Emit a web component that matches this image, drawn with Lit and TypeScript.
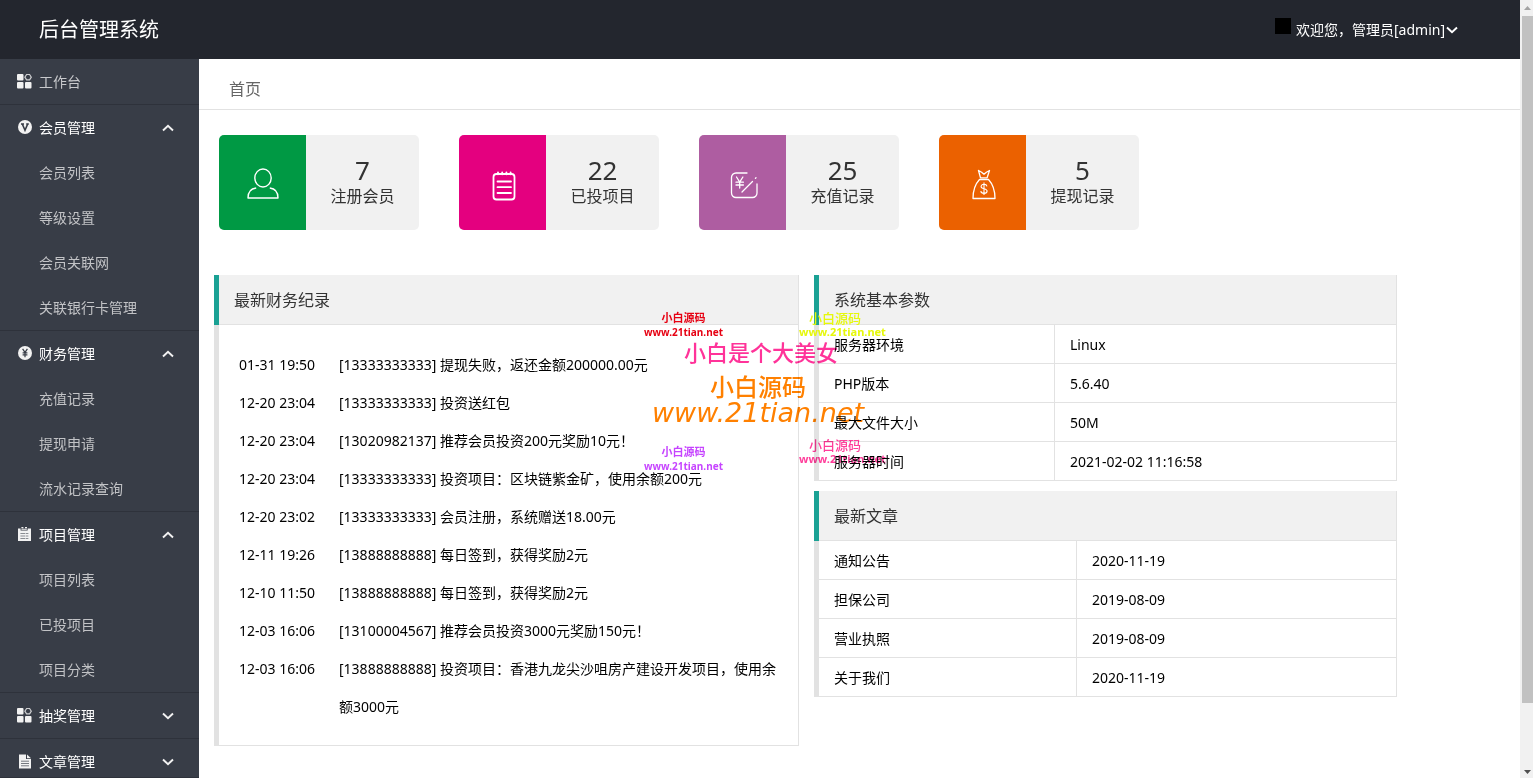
import { LitElement, html, css, svg, nothing } from "lit";
import { customElement } from "lit/decorators.js";

const navIcons: Record<string, unknown> = {
  grid: svg`<svg viewBox="0 0 16 16" width="16" height="16" aria-hidden="true">
    <g fill="currentColor"><rect x="1" y="1" width="6.500" height="6.500" rx="1"/><rect x="1" y="9" width="6.500" height="6.500" rx="1"/><rect x="9" y="9" width="6.500" height="6.500" rx="1"/></g>
    <path d="M10.600 1.500h3l1.700 2.700-1.700 2.600h-3L8.900 4.200z" fill="none" stroke="currentColor" stroke-width="1.200" opacity=".8"/></svg>`,
  vip: svg`<svg viewBox="-1 0 16 16" width="16" height="16" aria-hidden="true">
    <circle cx="8" cy="8" r="7" fill="currentColor"/><path d="M4 5h3M9.200 5h2.600M5.400 5.200 8 11.200 10.600 5.200" fill="none" stroke="#383d47" stroke-width="1.600"/></svg>`,
  money: svg`<svg viewBox="-1 0 16 16" width="16" height="16" aria-hidden="true">
    <circle cx="8" cy="8" r="7" fill="currentColor"/><path d="M5.600 3.800 8 7.400l2.400-3.600M8 7.200v5M5.600 7.800h4.800M5.600 9.800h4.800" fill="none" stroke="#383d47" stroke-width="1.200"/></svg>`,
  board: svg`<svg viewBox="0 0 16 16" width="16" height="16" aria-hidden="true">
    <path d="M2 2.500h2.600v2h7V2.500H15V15H2z" fill="currentColor"/><path d="M5.400 1.600h2M9 1.600h2M5.400 3.200h5.400" stroke="currentColor" stroke-width="1.100"/><path d="M4.400 7.500h8M4.400 10h8M4.400 12.500h8" stroke="#383d47" stroke-width=".8" opacity=".7" stroke-dasharray="5 .6"/></svg>`,
  doc: svg`<svg viewBox="0 0 16 16" width="16" height="16" aria-hidden="true">
    <path d="M3 1.500h7v4.600h5V15.500H3z" fill="currentColor"/><path d="M11 1.500 15 5.200h-4z" fill="currentColor"/><path d="M5 8.200h8M5 10.500h8M5 12.800h8" stroke="#383d47" stroke-width=".9" opacity=".75"/></svg>`,
};

const chevron = (up: boolean) => svg`<svg viewBox="0 0 12 8" width="12" height="8" aria-hidden="true">
  <path d=${up ? "M1 6.5 6 1.7l5 4.8" : "M1 1.5 6 6.3l5-4.8"} fill="none" stroke="currentColor" stroke-width="1.900"/></svg>`;

const statIcons: Record<string, unknown> = {
  user: svg`<svg viewBox="1 1 34 34" width="34" height="34" aria-hidden="true" fill="none" stroke="#fff" stroke-width="1.400">
    <ellipse cx="17" cy="11" rx="8.200" ry="9"/><path d="M10.200 21C5 21.600 2 25 2 31h30c0-6-3-9.400-8.200-10" stroke-linejoin="round"/></svg>`,
  list: svg`<svg viewBox="0 -1 34 34" width="34" height="34" aria-hidden="true" fill="none" stroke="#fff" stroke-width="1.800" stroke-linecap="round">
    <rect x="6.500" y="5" width="21" height="25.500" rx="3"/><path d="M10.500 12.500h13.500M10.500 18.200h13.500M10.500 24h13.500"/><path d="M11 3.300v2M15.200 3.300v2M19.400 3.300v2M23.600 3.300v2"/></svg>`,
  recharge: svg`<svg viewBox="0 0 34 34" width="34" height="34" aria-hidden="true" fill="none" stroke="#fff" stroke-width="1.300" stroke-linecap="round">
    <path d="M20 5H9a4.500 4.500 0 0 0-4.500 4.500V25A4.500 4.500 0 0 0 9 29.500h16.500A4.500 4.500 0 0 0 30 25V16"/><path d="M15 24 25.500 13.500M28.400 10.400l.6-.6"/><path d="M9.500 9l3.200 5 3.200-5M12.700 14v6M9 14.200h7.400M9 17h7.400"/></svg>`,
  bag: svg`<svg viewBox="0 0 34 34" width="34" height="34" aria-hidden="true" fill="none" stroke="#fff" stroke-width="1.300" stroke-linejoin="round">
    <path d="M13.500 9.800 11.500 2.500l3.100 1.700L17 6.200l2.400-2L22.500 2.500l-2.400 7.300z"/><path d="M12.500 11.500h9c4.200 4.500 6.500 9.800 6.500 19H6c0-9.200 2.300-14.500 6.500-19z"/><path d="M20 18.300c-.3-1.400-1.500-2-3-2-1.700 0-2.900.8-2.900 2.200 0 3 6 1.600 6 4.600 0 1.500-1.300 2.300-3.100 2.300-1.700 0-3-.8-3.200-2.300M17 14.500v12.600" stroke-width="1.100"/></svg>`,
};

interface NavGroup { label: string; icon: string; state: "link" | "open" | "closed"; items: string[] }

const nav: NavGroup[] = [
  { label: "工作台", icon: "grid", state: "link", items: [] },
  { label: "会员管理", icon: "vip", state: "open", items: ["会员列表", "等级设置", "会员关联网", "关联银行卡管理"] },
  { label: "财务管理", icon: "money", state: "open", items: ["充值记录", "提现申请", "流水记录查询"] },
  { label: "项目管理", icon: "board", state: "open", items: ["项目列表", "已投项目", "项目分类"] },
  { label: "抽奖管理", icon: "grid", state: "closed", items: [] },
  { label: "文章管理", icon: "doc", state: "closed", items: [] },
];

const stats = [
  { value: "7", label: "注册会员", icon: "user", tone: "green" },
  { value: "22", label: "已投项目", icon: "list", tone: "pink" },
  { value: "25", label: "充值记录", icon: "recharge", tone: "purple" },
  { value: "5", label: "提现记录", icon: "bag", tone: "orange" },
];

const records = [
  ["01-31 19:50", "[13333333333] 提现失败，返还金额200000.00元"],
  ["12-20 23:04", "[13333333333] 投资送红包"],
  ["12-20 23:04", "[13020982137] 推荐会员投资200元奖励10元！"],
  ["12-20 23:04", "[13333333333] 投资项目：区块链紫金矿，使用余额200元"],
  ["12-20 23:02", "[13333333333] 会员注册，系统赠送18.00元"],
  ["12-11 19:26", "[13888888888] 每日签到，获得奖励2元"],
  ["12-10 11:50", "[13888888888] 每日签到，获得奖励2元"],
  ["12-03 16:06", "[13100004567] 推荐会员投资3000元奖励150元！"],
  ["12-03 16:06", "[13888888888] 投资项目：香港九龙尖沙咀房产建设开发项目，使用余额3000元"],
];

const params = [
  ["服务器环境", "Linux"],
  ["PHP版本", "5.6.40"],
  ["最大文件大小", "50M"],
  ["服务器时间", "2021-02-02 11:16:58"],
];

const articles = [
  ["通知公告", "2020-11-19"],
  ["担保公司", "2019-08-09"],
  ["营业执照", "2019-08-09"],
  ["关于我们", "2020-11-19"],
];

@customElement("app-root")
export class AppRoot extends LitElement {
  static styles = css`
    :host {
      display: grid;
      grid-template-columns: minmax(0, 1fr) 13px;
      height: 100vh;
      overflow: hidden;
      background: #fff;
      color: #000;
      font: 14px/20px "Noto Sans", "Noto Sans CJK SC", sans-serif;
    }
    * { box-sizing: border-box; }
    ul { list-style: none; margin: 0; padding: 0; }
    a { color: inherit; text-decoration: none; }
    button { font: inherit; color: inherit; background: none; border: 0; padding: 0; text-align: left; cursor: pointer; }
    svg { display: block; flex: none; }

    .page { display: grid; grid-template: 59px minmax(0, 1fr) / 199px minmax(0, 1fr); height: 100vh; }
    .top {
      grid-column: 1 / -1; display: flex; align-items: center; justify-content: space-between;
      background: #23262e; color: #fff; padding: 0 62px 0 39px;
    }
    .brand { margin: 0; font-size: 20px; line-height: 30px; font-weight: 400; }
    .user { display: flex; align-items: center; }
    .avatar { width: 16px; height: 16px; background: #000; margin: 0 5px 8px 0; }
    .hello { margin-right: 1px; }

    .side { background: #383d47; overflow: hidden; border-bottom: 1px solid #2e323b; }
    .group { border-bottom: 1px solid #2e323b; }
    .head { display: flex; align-items: center; width: 100%; height: 45px; padding: 0 25px 0 16px; color: #fff; }
    .head .label { flex: 1; margin-left: 7px; }
    .head.link { color: #c8c9cc; }
    .head svg { color: #f2f2f2; }
    .head svg:first-child { margin-bottom: 2px; }
    .sub { display: block; height: 45px; line-height: 45px; padding-left: 39px; color: #c2c3c6; }

    .crumb { height: 51px; padding: 0 30px; line-height: 60px; font-size: 16px; color: #666; border-bottom: 1px solid #e2e2e2; }
    .stats { display: flex; flex-wrap: wrap; gap: 40px; padding: 25px 20px 45px; }
    .stat { display: flex; width: 200px; height: 95px; border-radius: 5px; overflow: hidden; background: #f1f1f1; color: #333; }
    .badge { display: flex; align-items: center; justify-content: center; width: 87px; padding: 5px 0 0 3px; }
    .green { background: #009944; }
    .pink { background: #e4007f; }
    .purple { background: #ae5da1; }
    .orange { background: #eb6100; }
    .figures { flex: 1; text-align: center; padding-top: 20px; }
    .value { font-size: 26px; line-height: 30px; }
    .name { font-size: 16px; line-height: 23px; }

    .panels { display: grid; grid-template-columns: 585fr 583fr; gap: 15px; align-items: start; padding: 0 123px 0 15px; }
    .column { display: grid; gap: 10px; }
    .panel { border: solid #e2e2e2; border-width: 0 1px 1px 5px; }
    .title {
      margin: 0 0 0 -5px; height: 50px; line-height: 50px; padding-left: 15px; font-size: 16px; font-weight: 400; color: #333;
      background: #f1f1f1; border-left: 5px solid #1aa194; box-shadow: inset 0 -1px #e2e2e2;
    }
    .records { padding: 21px 19px 19px 20px; line-height: 38px; }
    .record { display: grid; grid-template-columns: 100px minmax(0, 1fr); }
    table { width: 100%; border-collapse: separate; border-spacing: 0; table-layout: fixed; }
    th, td { height: 39px; padding: 2px 15px 0; text-align: left; font-weight: 400; border-bottom: 1px solid #e2e2e2; }
    tr:last-child > * { height: 38px; border-bottom: 0; }
    th { border-right: 1px solid #e2e2e2; }
    .narrow th { width: 236px; }
    .wide th { width: 258px; }

    .mark { position: absolute; display: grid; justify-items: center; white-space: nowrap; pointer-events: none; }
    .small { font-size: 11px; line-height: 14px; font-weight: 700; }
    .tag { justify-items: start; }
    .tag .title-text { font-size: 13px; padding-left: 10px; font-weight: 500; }
    .red, .violet { left: 644px; }
    .red .site, .violet .site { font-size: 10px; }
    .yellow, .rose { left: 799px; }
    .red, .yellow { top: 311px; }
    .violet { top: 445px; }
    .rose { top: 438px; }
    .red { color: #e60012; }
    .violet { color: #c644ff; }
    .yellow { color: #e6f80a; }
    .rose { color: #ff3d9a; }
    .rose, .beauty, .large { mix-blend-mode: multiply; }
    .beauty { left: 684px; top: 337px; color: #ff3399; font-size: 22px; line-height: 30px; font-weight: 500; }
    .large { left: 652px; top: 374px; color: #ff8000; font-size: 24px; line-height: 26px; font-weight: 500; }
    .large .site { font-family: "DejaVu Sans", sans-serif; font-size: 27px; font-style: italic; }

    .bar { display: flex; flex-direction: column; background: #f1f1f1; align-items: center; padding: 6px 0 4px 2px; }
    .thumb { width: 100%; flex: 1; margin: 6px 0 67px; background: #c1c1c1; }
  `;

  private group(g: NavGroup) {
    const open = g.state === "open";
    const inner = html`${navIcons[g.icon]}<span class="label">${g.label}</span>`;
    return html`<li class="group">
      ${g.state === "link"
        ? html`<a class="head link" href="#">${inner}</a>`
        : html`<button class="head" aria-expanded=${open ? "true" : "false"}>${inner}${chevron(open)}</button>`}
      ${g.items.length ? html`<ul>${g.items.map((i) => html`<li><a class="sub" href="#">${i}</a></li>`)}</ul>` : nothing}
    </li>`;
  }

  private table(rows: string[][], kind: string) {
    return html`<table class=${kind}><tbody>
      ${rows.map(([k, v]) => html`<tr><th scope="row">${k}</th><td>${v}</td></tr>`)}
    </tbody></table>`;
  }

  private mark(kind: string, name: string, site = "") {
    return html`<div class="mark ${kind}"><span class="title-text">${name}</span>${site ? html`<span class="site">${site}</span>` : nothing}</div>`;
  }

  render() {
    return html`
      <div class="page">
        <header class="top">
          <h1 class="brand">后台管理系统</h1>
          <button class="user"><span class="avatar"></span><span class="hello">欢迎您，管理员[admin]</span>${chevron(false)}</button>
        </header>
        <nav class="side"><ul>${nav.map((g) => this.group(g))}</ul></nav>
        <main>
          <div class="crumb">首页</div>
          <div class="stats">
            ${stats.map((s) => html`<div class="stat">
              <div class="badge ${s.tone}">${statIcons[s.icon]}</div>
              <div class="figures"><div class="value">${s.value}</div><div class="name">${s.label}</div></div>
            </div>`)}
          </div>
          <div class="panels">
            <section class="panel">
              <h2 class="title">最新财务纪录</h2>
              <ul class="records">
                ${records.map(([t, d]) => html`<li class="record"><time>${t}</time><span>${d}</span></li>`)}
              </ul>
            </section>
            <div class="column">
              <section class="panel"><h2 class="title">系统基本参数</h2>${this.table(params, "narrow")}</section>
              <section class="panel"><h2 class="title">最新文章</h2>${this.table(articles, "wide")}</section>
            </div>
          </div>
        </main>
      </div>
      <div class="bar" aria-hidden="true">
        <svg viewBox="0 0 7 4" width="7" height="4"><path d="M0 4 3.500 0 7 4z" fill="#a3a3a3"/></svg>
        <div class="thumb"></div>
        <svg viewBox="0 0 7 4" width="7" height="4"><path d="M0 0h7L3.500 4z" fill="#505050"/></svg>
      </div>
      ${this.mark("small red", "小白源码", "www.21tian.net")}
      ${this.mark("small tag yellow", "小白源码", "www.21tian.net")}
      ${this.mark("beauty", "小白是个大美女")}
      ${this.mark("large", "小白源码", "www.21tian.net")}
      ${this.mark("small violet", "小白源码", "www.21tian.net")}
      ${this.mark("small tag rose", "小白源码", "www.21tian.net")}
    `;
  }
}
